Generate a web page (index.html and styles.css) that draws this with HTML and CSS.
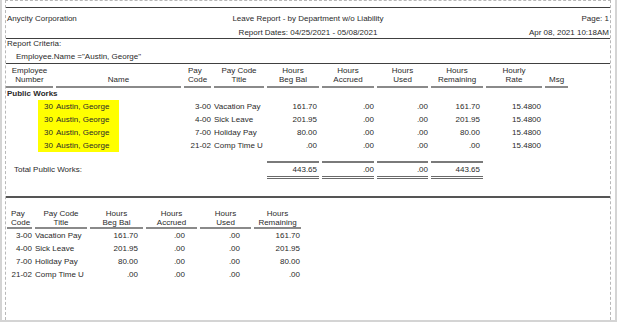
FILE: index.html
```html
<!DOCTYPE html>
<html>
<head>
<meta charset="utf-8">
<link rel="stylesheet" href="styles.css">
</head>
<body>
<div class="frame">
  <div class="page">
    <div class="head">
      <div class="head-row">
        <span class="co">Anycity Corporation</span>
        <span class="title">Leave Report - by Department w/o Liability</span>
        <span class="right">Page: 1</span>
      </div>
      <div class="head-row second">
        <span class="co"></span>
        <span class="title">Report Dates: 04/25/2021 - 05/08/2021</span>
        <span class="right">Apr 08, 2021 10:18AM</span>
      </div>
    </div>

    <div class="criteria">
      <div class="crit-label">Report Criteria:</div>
      <div class="crit-value">Employee.Name ="Austin, George"</div>
    </div>

    <div class="cols col-head">
      <div class="hc">Employee<br>Number</div>
      <div class="hc bottom">Name</div>
      <div class="hc left">Pay<br>Code</div>
      <div class="hc">Pay Code<br>Title</div>
      <div class="hc">Hours<br>Beg Bal</div>
      <div class="hc">Hours<br>Accrued</div>
      <div class="hc">Hours<br>Used</div>
      <div class="hc">Hours<br>Remaining</div>
      <div class="hc">Hourly<br>Rate</div>
      <div class="hc left bottom">Msg</div>
    </div>

    <div class="dept">Public Works</div>

    <div class="detail">
      <div class="cols row hl">
        <div class="r">30</div><div>Austin, George</div><div class="r">3-00</div><div>Vacation Pay</div>
        <div class="r p2">161.70</div><div class="r">.00</div><div class="r">.00</div><div class="r p3">161.70</div><div class="r p1">15.4800</div><div></div>
      </div>
      <div class="cols row hl">
        <div class="r">30</div><div>Austin, George</div><div class="r">4-00</div><div>Sick Leave</div>
        <div class="r p2">201.95</div><div class="r">.00</div><div class="r">.00</div><div class="r p3">201.95</div><div class="r p1">15.4800</div><div></div>
      </div>
      <div class="cols row hl">
        <div class="r">30</div><div>Austin, George</div><div class="r">7-00</div><div>Holiday Pay</div>
        <div class="r p2">80.00</div><div class="r">.00</div><div class="r">.00</div><div class="r p3">80.00</div><div class="r p1">15.4800</div><div></div>
      </div>
      <div class="cols row hl">
        <div class="r">30</div><div>Austin, George</div><div class="r">21-02</div><div>Comp Time U</div>
        <div class="r p2">.00</div><div class="r">.00</div><div class="r">.00</div><div class="r p3">.00</div><div class="r p1">15.4800</div><div></div>
      </div>
    </div>

    <div class="cols total">
      <div class="total-label">Total Public Works:</div>
      <div class="r p2 tot">443.65</div>
      <div class="r tot">.00</div>
      <div class="r tot">.00</div>
      <div class="r p3 tot">443.65</div>
    </div>

    <div class="sep"></div>

    <div class="sum sum-head">
      <div class="hc left">Pay<br>Code</div>
      <div class="hc">Pay Code<br>Title</div>
      <div class="hc">Hours<br>Beg Bal</div>
      <div class="hc">Hours<br>Accrued</div>
      <div class="hc">Hours<br>Used</div>
      <div class="hc">Hours<br>Remaining</div>
    </div>
    <div class="sum row">
      <div class="r">3-00</div><div>Vacation Pay</div><div class="r s3">161.70</div><div class="r s4">.00</div><div class="r s5">.00</div><div class="r p1">161.70</div>
    </div>
    <div class="sum row">
      <div class="r">4-00</div><div>Sick Leave</div><div class="r s3">201.95</div><div class="r s4">.00</div><div class="r s5">.00</div><div class="r p1">201.95</div>
    </div>
    <div class="sum row">
      <div class="r">7-00</div><div>Holiday Pay</div><div class="r s3">80.00</div><div class="r s4">.00</div><div class="r s5">.00</div><div class="r p1">80.00</div>
    </div>
    <div class="sum row">
      <div class="r">21-02</div><div>Comp Time U</div><div class="r s3">.00</div><div class="r s4">.00</div><div class="r s5">.00</div><div class="r p1">.00</div>
    </div>
  </div>
</div>
</body>
</html>
```

FILE: styles.css
```css
* { box-sizing: border-box; }
html, body { margin: 0; padding: 0; background: #fff; }
body {
  font-family: "Liberation Sans", Arial, sans-serif;
  font-size: 8px;
  color: #2a2a2a;
}
.frame {
  width: 617px;
  height: 322px;
  border-left: 2px solid #d4d4d4;
  border-right: 2px solid #d4d4d4;
  border-bottom: 2px solid #d4d4d4;
  overflow: hidden;
}
.page {
  margin-left: 3px;
  width: 606px;
  height: 320px;
  border-left: 1px dashed #b8b8b8;
  border-right: 1px dashed #b8b8b8;
  border-top: 1px dashed #b8b8b8;
  overflow: hidden;
}
.head {
  margin-top: 6px;
  border-top: 1px solid #404040;
  border-bottom: 1px solid #404040;
  padding: 6px 0 0 0;
  height: 32px;
}
.head-row {
  display: grid;
  grid-template-columns: 1fr auto 1fr;
  line-height: 10px;
  white-space: nowrap;
}
.head-row.second { margin-top: 4px; }
.co { padding-left: 1px; }
.right { text-align: right; padding-right: 1px; }
.criteria {
  border-bottom: 1px solid #404040;
  height: 25px;
  line-height: 10px;
}
.crit-label { padding-left: 1px; }
.crit-value { padding-left: 10px; margin-top: 3px; }
.cols {
  display: grid;
  grid-template-columns: 47px 125px 27px 50px 52px 52px 51px 52px 56px 23px;
  column-gap: 3px;
  white-space: nowrap;
}
.col-head { padding-top: 2px; }
.hc {
  text-align: center;
  line-height: 9px;
  padding-bottom: 2px;
  border-bottom: 2px solid #8a8a8a;
}
.hc.left { text-align: left; padding-left: 4px; }
.hc.bottom { padding-top: 9px; }
.dept {
  font-weight: bold;
  line-height: 12px;
  padding-left: 1px;
}
.row { height: 13px; line-height: 13px; }
.hl {
  background: linear-gradient(#ffff00, #ffff00) no-repeat 32px 0 / 81px 100%;
}
.r { text-align: right; }
.p1 { padding-right: 1px; }
.p2 { padding-right: 2px; }
.p3 { padding-right: 3px; }
.total { margin-top: 9px; line-height: 12px; }
.total-label { grid-column: 1 / 5; padding-left: 8px; padding-top: 3px; }
.tot {
  border-top: 2px solid #7a7a7a;
  border-bottom: 3px double #6a6a6a;
  padding-top: 1px;
}
.sep {
  margin-top: 17px;
  border-top: 2px solid #555;
}
.sum {
  display: grid;
  grid-template-columns: 25px 52px 53px 51px 51px 47px;
  column-gap: 3px;
  margin-left: 1px;
  white-space: nowrap;
}
.sum-head { margin-top: 11px; }
.sum-head .hc { padding-bottom: 0; }
.sum-head .hc.left { padding-left: 4px; }
.s3 { padding-right: 5px; }
.s4 { padding-right: 12px; }
.s5 { padding-right: 11px; }
```
